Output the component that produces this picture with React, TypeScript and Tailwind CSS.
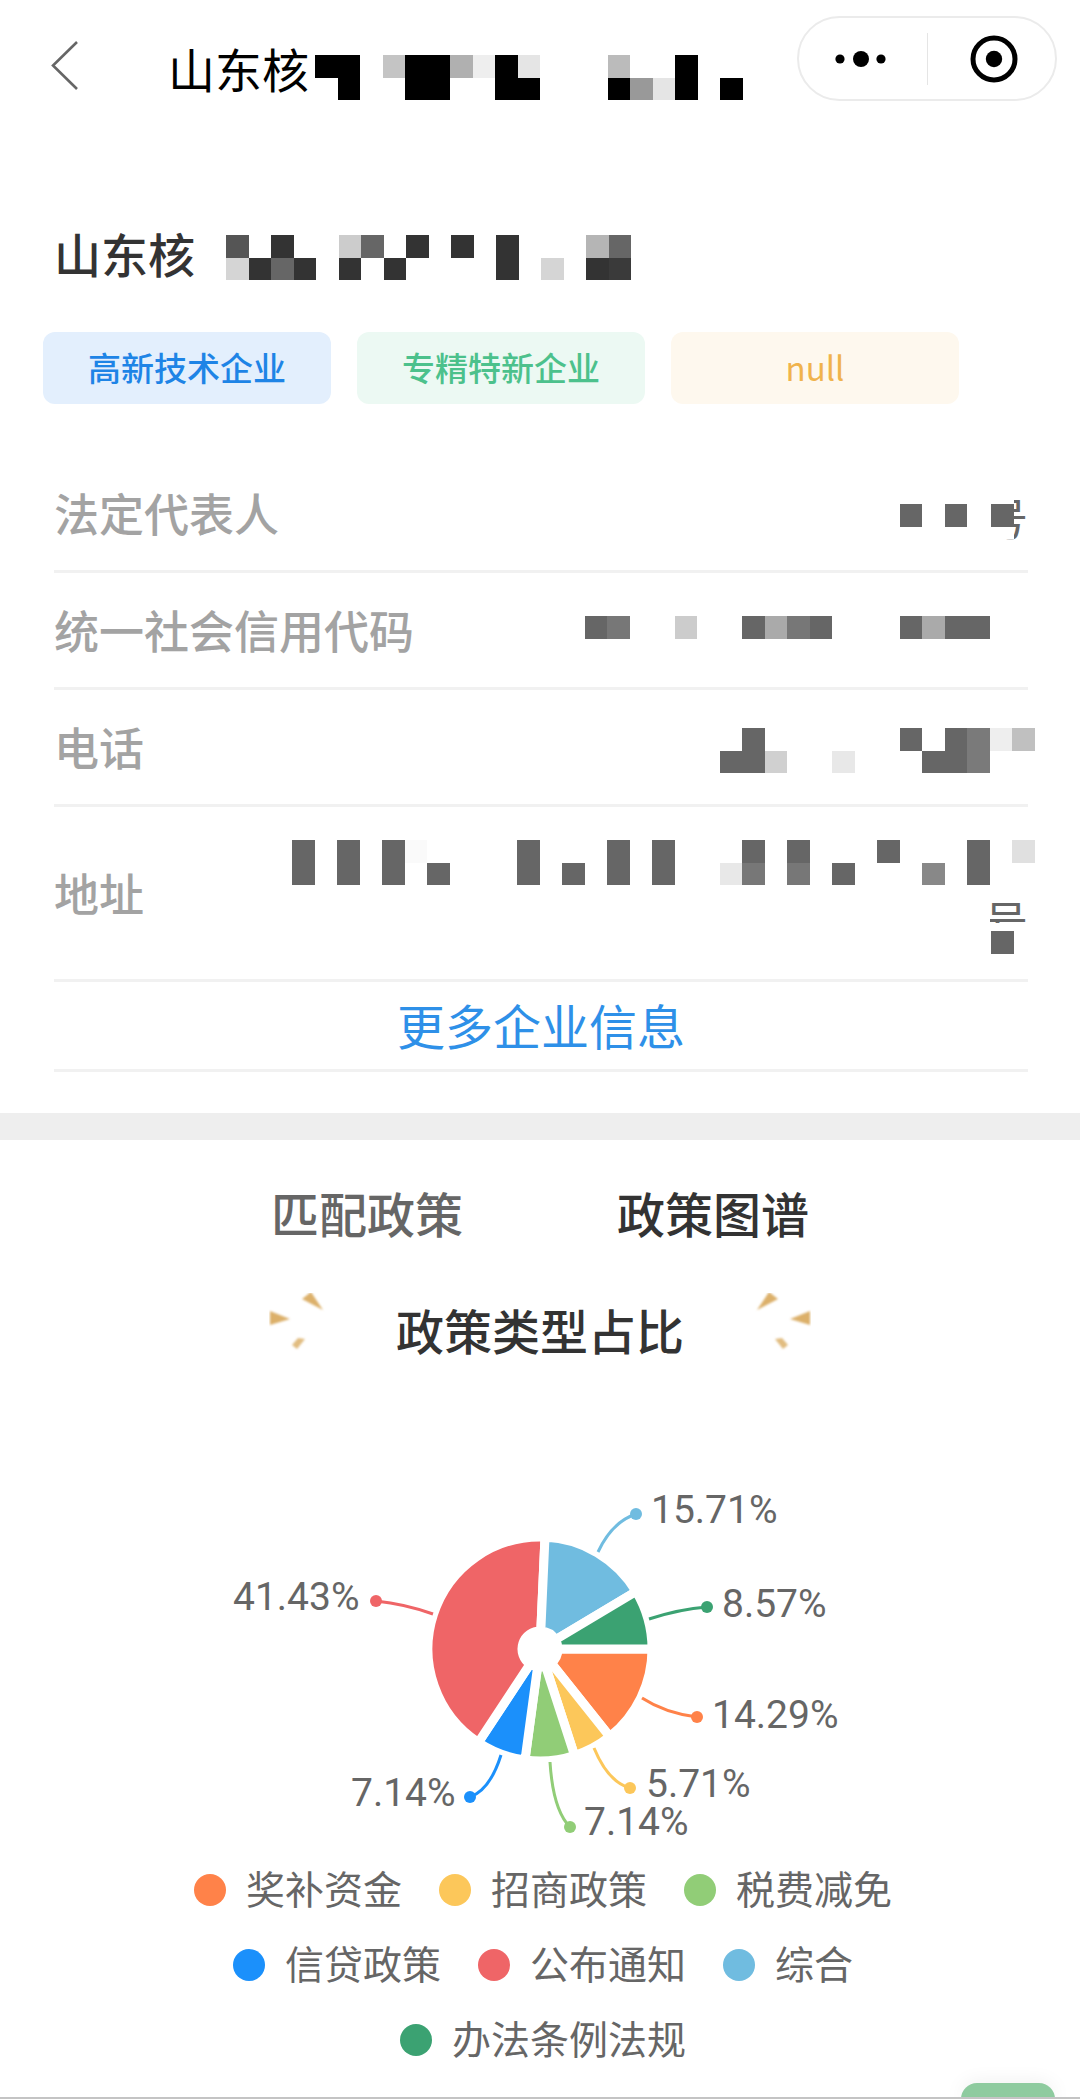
import React from "react";

type Cells = Record<number, string>;

function Mosaic({ top, bottom, from, to, className = "" }: { top: Cells; bottom?: Cells; from: number; to: number; className?: string }) {
  const idx: number[] = [];
  for (let i = from; i <= to; i++) idx.push(i);
  const rows = bottom ? [top, bottom] : [top];
  return (
    <div className={"flex flex-col " + className}>
      {rows.map((r, ri) => (
        <div key={ri} className="flex">
          {idx.map((k) => (
            <div key={k} className="h-[22.5px] w-[22.5px] shrink-0" style={{ backgroundColor: r[k] || "transparent" }} />
          ))}
        </div>
      ))}
    </div>
  );
}

function Tail({ second }: { second?: boolean }) {
  return (
    <div className={"relative h-[44px] w-[44px] text-[44px] leading-[44px] text-[#666] " + (second ? "mt-[13px]" : "-ml-[5.5px]")}>
      号
      {second ? (
        <>
          <span className="absolute left-0 top-0 h-full w-[6px] bg-white" />
          <span className="absolute left-0 top-[25px] h-[19px] w-[44px] bg-white" />
          <span className="absolute left-[7px] top-[33px] h-[23px] w-[22.5px] bg-[#666]" />
        </>
      ) : (
        <>
          <span className="absolute left-0 top-0 h-full w-[29.5px] bg-white" />
          <span className="absolute left-[7px] top-[9px] h-[22.5px] w-[22.5px] bg-[#666]" />
        </>
      )}
    </div>
  );
}

function polar(r: number, a: number) {
  const t = (a * Math.PI) / 180;
  return [540 + r * Math.cos(t), 1649 + r * Math.sin(t)];
}

const slices = [
  { c: "#ff8249", v: 14.29 },
  { c: "#fcc75a", v: 5.71 },
  { c: "#91cd77", v: 7.14 },
  { c: "#1b90fb", v: 7.14 },
  { c: "#ef6567", v: 41.43 },
  { c: "#70bce0", v: 15.71 },
  { c: "#3ba272", v: 8.57 },
];

function slicePaths() {
  let a = 0;
  return slices.map((s) => {
    const b = a + (s.v * 360) / 100;
    const R = 112;
    const r0 = 18;
    const [x1, y1] = polar(R, a);
    const [x2, y2] = polar(R, b);
    const [x3, y3] = polar(r0, b);
    const [x4, y4] = polar(r0, a);
    const large = b - a > 180 ? 1 : 0;
    const d = `M${x4} ${y4}L${x1} ${y1}A${R} ${R} 0 ${large} 1 ${x2} ${y2}L${x3} ${y3}A${r0} ${r0} 0 ${large} 0 ${x4} ${y4}Z`;
    a = b;
    return { d, c: s.c };
  });
}

const labels = [
  { c: "#70bce0", line: "M598 1552Q612 1522 636 1514", dot: [636, 1514], t: "15.71%", x: 651, y: 1523 },
  { c: "#3ba272", line: "M649 1619Q680 1609 707 1607", dot: [707, 1607], t: "8.57%", x: 722, y: 1617 },
  { c: "#ef6567", line: "M376 1601Q405 1604 433 1614", dot: [376, 1601], t: "41.43%", x: 233, y: 1610 },
  { c: "#ff8249", line: "M642 1698Q665 1713 697 1717", dot: [697, 1717], t: "14.29%", x: 712, y: 1728 },
  { c: "#fcc75a", line: "M594 1748Q608 1782 630 1788", dot: [630, 1788], t: "5.71%", x: 646, y: 1797 },
  { c: "#91cd77", line: "M550 1762Q553 1810 570 1827", dot: [570, 1827], t: "7.14%", x: 584, y: 1835 },
  { c: "#1b90fb", line: "M501 1755Q490 1790 470 1797", dot: [470, 1797], t: "7.14%", x: 351, y: 1806 },
];

const legend = [
  { c: "#ff8249", t: "奖补资金" },
  { c: "#fcc75a", t: "招商政策" },
  { c: "#91cd77", t: "税费减免" },
  { c: "#1b90fb", t: "信贷政策" },
  { c: "#ef6567", t: "公布通知" },
  { c: "#70bce0", t: "综合" },
  { c: "#3ba272", t: "办法条例法规" },
];

function Rays({ flip }: { flip?: boolean }) {
  return (
    <svg width="56" height="64" viewBox="272 1297 56 64" className={"-mt-[8px] shrink-0 " + (flip ? "-scale-x-100" : "")}>
      <defs>
        <filter id={flip ? "bl2" : "bl1"} x="-30%" y="-30%" width="160%" height="160%">
          <feGaussianBlur stdDeviation="1.1" />
        </filter>
      </defs>
      <g fill="#dcb06a" filter={`url(#${flip ? "bl2" : "bl1"})`}>
        <polygon points="273,1315 293,1323 273,1329" />
        <polygon points="305,1303 314,1296 326,1314" />
        <polygon points="301,1342 308,1343 300,1353 295,1349" opacity="0.85" />
      </g>
    </svg>
  );
}

function Row({ h, label, children }: { h: string; label: string; children: React.ReactNode }) {
  return (
    <div className={"flex justify-between border-b-[3px] border-[#f1f1f1] " + h}>
      <span className="self-center text-[45px] font-medium leading-[64px] text-[#a3a3a3]">{label}</span>
      {children}
    </div>
  );
}

const G = "#666";

export default function App() {
  return (
    <div className="relative flex h-[2099px] w-[1080px] flex-col overflow-hidden bg-white font-['Noto_Sans_CJK_SC','Noto_Sans',sans-serif]">
      {/* header */}
      <div className="flex h-[118px] shrink-0 items-start">
        <svg width="30" height="52" viewBox="0 0 30 52" className="ml-[50px] mt-[40px] shrink-0" fill="none" stroke="#666" strokeWidth="2.6">
          <path d="M27 2L3 25.5L27 49" />
        </svg>
        <div className="ml-[88px] mt-[36px] flex w-[624px] items-start">
          <span className="w-[141px] shrink-0 text-[47px] leading-[64px] text-black">山东核</span>
          <Mosaic
            className="ml-[6px] mt-[19px]"
            from={0}
            to={18}
            top={{ 0: "#000", 1: "#000", 3: "#c4c4c4", 4: "#000", 5: "#000", 6: "#b0b0b0", 7: "#eee", 8: "#000", 9: "#e5e5e5", 13: "#bbb", 16: "#000" }}
            bottom={{ 1: "#000", 4: "#000", 5: "#000", 8: "#000", 9: "#000", 13: "#000", 14: "#999", 15: "#e5e5e5", 16: "#000", 18: "#000" }}
          />
        </div>
        <div className="ml-[5px] mt-[16px] flex h-[85px] w-[260px] shrink-0 items-center rounded-full border-2 border-[#ebebeb]">
          <svg width="62" height="20" viewBox="0 0 62 20" className="ml-[31px] shrink-0" fill="#000">
            <circle cx="10" cy="10" r="4.6" />
            <circle cx="31" cy="10" r="8" />
            <circle cx="51" cy="10" r="4.6" />
          </svg>
          <div className="ml-[35px] h-[52px] w-px bg-[#e5e5e5]" />
          <svg width="48" height="48" viewBox="0 0 48 48" className="ml-[42px] shrink-0" fill="none">
            <circle cx="24" cy="24" r="21" stroke="#000" strokeWidth="5" />
            <circle cx="24" cy="24" r="8.2" fill="#000" />
          </svg>
        </div>
      </div>

      {/* company */}
      <div className="mt-[100px] flex h-[64px] shrink-0 items-start pl-[54px]">
        <span className="mt-[3px] w-[141px] shrink-0 text-[47px] font-medium leading-[64px] text-[#333]">山东核</span>
        <Mosaic
          className="ml-[31px] mt-[17px]"
          from={0}
          to={17}
          top={{ 0: "#555", 2: "#333", 5: "#ccc", 6: "#666", 8: "#333", 10: "#333", 12: "#333", 16: "#b5b5b5", 17: "#666" }}
          bottom={{ 0: "#d5d5d5", 1: "#333", 2: "#666", 3: "#333", 5: "#333", 7: "#333", 12: "#333", 14: "#d5d5d5", 16: "#333", 17: "#3a3a3a" }}
        />
      </div>

      {/* tags */}
      <div className="mt-[50px] flex shrink-0 gap-[26px] pl-[43px]">
        <div className="flex h-[72px] w-[288px] items-center justify-center rounded-[12px] bg-[#e3effd] text-[33px] font-medium text-[#1e84e6]">高新技术企业</div>
        <div className="flex h-[72px] w-[288px] items-center justify-center rounded-[12px] bg-[#ecf9f3] text-[33px] font-medium text-[#4cc18c]">专精特新企业</div>
        <div className="flex h-[72px] w-[288px] items-center justify-center rounded-[12px] bg-[#fef8ee] text-[33px] text-[#f0b34d]">null</div>
      </div>

      {/* info rows */}
      <div className="ml-[54px] mt-[52px] w-[974px] shrink-0">
        <Row h="h-[117px]" label="法定代表人">
          <div className="mt-[39px] flex items-start">
            <Mosaic className="mt-[9px]" from={27} to={30} top={{ 27: G, 29: G }} />
            <Tail />
          </div>
        </Row>
        <Row h="h-[117px]" label="统一社会信用代码">
          <Mosaic
            className="-mr-[6.5px] mt-[43px]"
            from={13}
            to={32}
            top={{ 13: G, 14: "#777", 17: "#ccc", 20: G, 21: "#aaa", 22: "#777", 23: G, 27: G, 28: "#aaa", 29: G, 30: G }}
          />
        </Row>
        <Row h="h-[117px]" label="电话">
          <Mosaic
            className="-mr-[6.5px] mt-[38px]"
            from={19}
            to={32}
            top={{ 20: G, 27: G, 29: G, 30: "#7a7a7a", 31: "#eee", 32: "#c0c0c0" }}
            bottom={{ 19: G, 20: G, 21: "#d0d0d0", 24: "#e8e8e8", 28: G, 29: G, 30: "#7a7a7a" }}
          />
        </Row>
        <Row h="h-[175px]" label="地址">
          <div className="mt-[33px] flex flex-col items-end">
            <Mosaic
              className="-mr-[6.5px]"
              from={0}
              to={32}
              top={{ 0: G, 2: G, 4: G, 5: "#fafafa", 10: G, 14: G, 16: G, 20: G, 22: G, 26: G, 30: G, 32: "#e0e0e0" }}
              bottom={{ 0: G, 2: G, 4: G, 6: G, 10: G, 12: G, 14: G, 16: G, 19: "#e8e8e8", 20: "#777", 22: "#777", 24: G, 28: "#888", 30: G }}
            />
            <Tail second />
          </div>
        </Row>
        <div className="flex h-[90px] items-center justify-center border-b-[3px] border-[#f1f1f1] pb-[4px] text-[48px] leading-[64px] text-[#2e90e8]">更多企业信息</div>
      </div>

      <div className="mt-[41px] h-[27px] shrink-0 bg-[#eeeeee]" />

      {/* tabs */}
      <div className="mt-[40px] flex h-[64px] shrink-0 justify-center gap-[154px] text-[48px] font-medium leading-[64px]">
        <span className="text-[#666]">匹配政策</span>
        <span className="text-[#333]">政策图谱</span>
      </div>

      {/* chart title */}
      <div className="mt-[53px] flex h-[64px] shrink-0 items-center justify-center gap-[71px]">
        <Rays />
        <span className="w-[288px] text-center text-[48px] font-medium leading-[64px] text-[#333]">政策类型占比</span>
        <Rays flip />
      </div>

      {/* pie chart */}
      <svg width="1080" height="402" viewBox="0 1450 1080 402" className="mt-[89px] block shrink-0">
        {slicePaths().map((p, i) => (
          <path key={i} d={p.d} fill={p.c} stroke="#fff" strokeWidth="9" strokeLinejoin="round" />
        ))}
        {labels.map((l, i) => (
          <g key={i}>
            <path d={l.line} fill="none" stroke={l.c} strokeWidth="3" />
            <circle cx={l.dot[0]} cy={l.dot[1]} r="6" fill={l.c} />
            <text x={l.x} y={l.y} className="fill-[#666] font-['Roboto',sans-serif] text-[39px]">
              {l.t}
            </text>
          </g>
        ))}
      </svg>

      {/* legend */}
      <div className="ml-[143px] flex w-[800px] shrink-0 flex-wrap justify-center gap-x-[37px]">
        {legend.map((l) => (
          <div key={l.t} className="flex h-[75px] items-center gap-[20px]">
            <span className="h-[32px] w-[32px] rounded-full" style={{ backgroundColor: l.c }} />
            <span className="pb-[5px] text-[39px] leading-[70px] text-[#666]">{l.t}</span>
          </div>
        ))}
      </div>

      <div className="absolute bottom-0 right-[25px] h-[16px] w-[94px] rounded-t-[30px] bg-[#8ecb9f] shadow-[0_0_20px_rgba(0,0,0,0.08)]" />
      <div className="absolute bottom-0 left-0 h-[2px] w-full bg-[#c4c4c4]" />
    </div>
  );
}
